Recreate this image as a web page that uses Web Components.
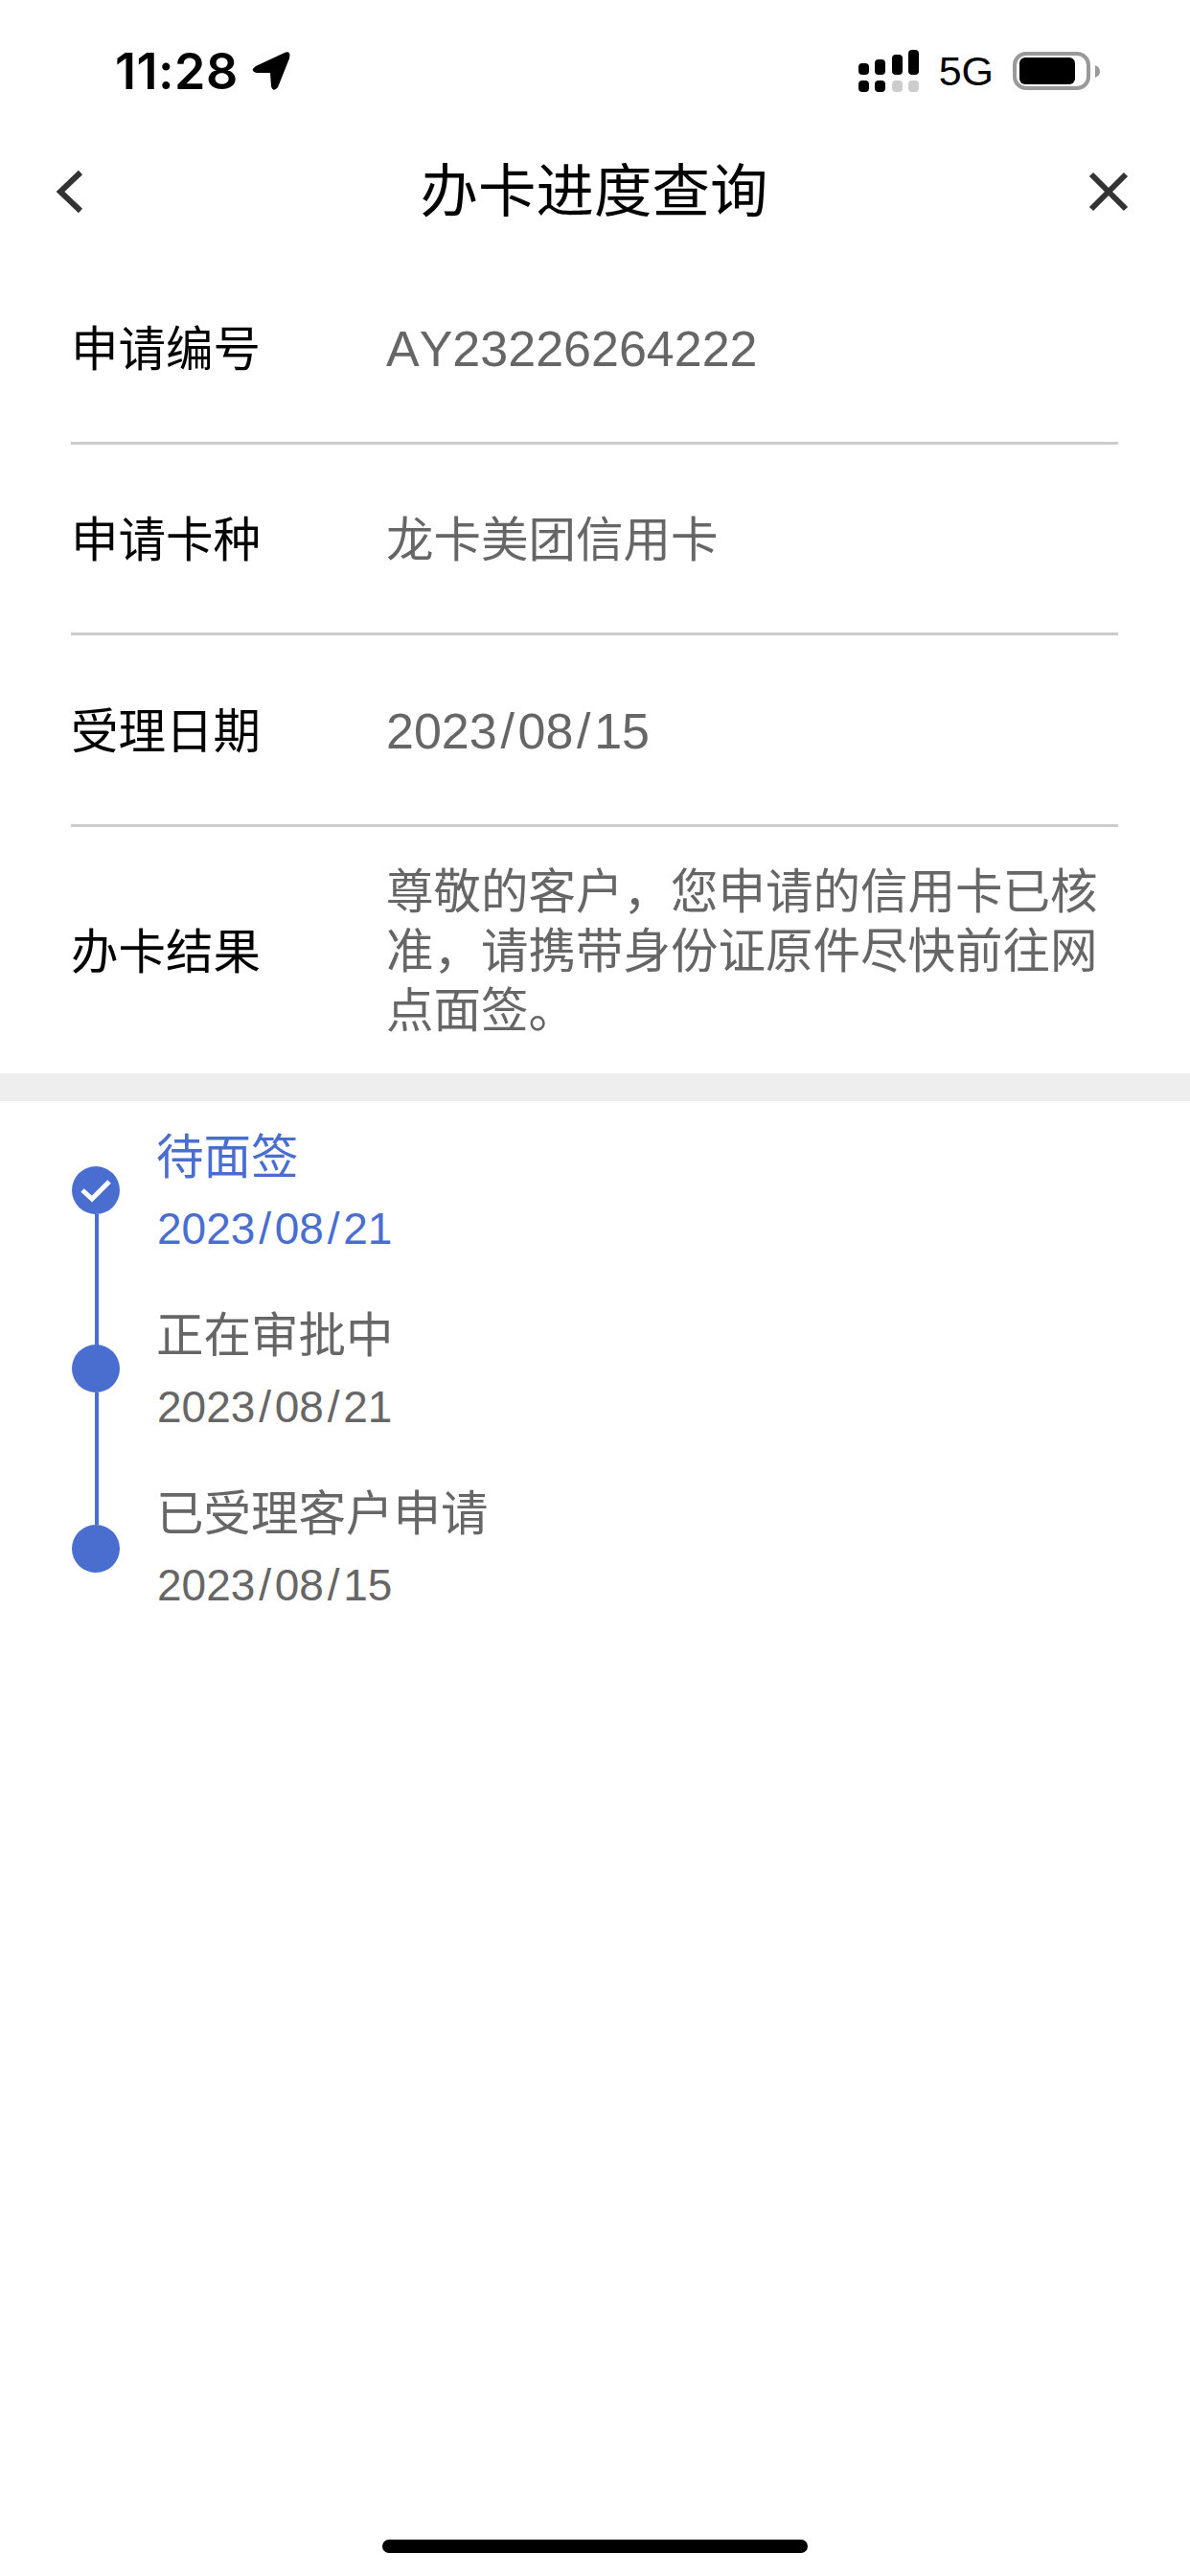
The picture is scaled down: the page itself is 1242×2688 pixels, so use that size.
<!DOCTYPE html>
<html lang="zh-CN">
<head>
<meta charset="utf-8">
<title>办卡进度查询</title>
<style>
  html, body { margin: 0; padding: 0; background: #fff; }
</style>
</head>
<body>
<app-screen>
  <status-bar></status-bar>
  <nav-bar>办卡进度查询</nav-bar>
  <info-list>
    <info-row num><span slot="label">申请编号</span>AY23226264222</info-row>
    <info-row><span slot="label">申请卡种</span>龙卡美团信用卡</info-row>
    <info-row num><span slot="label">受理日期</span>2023<span class="sl">/</span>08<span class="sl">/</span>15</info-row>
    <info-row last><span slot="label">办卡结果</span>尊敬的客户，您申请的信用卡已核准，请携带身份证原件尽快前往网点面签。</info-row>
  </info-list>
  <section-gap></section-gap>
  <progress-list>
    <progress-step state="current" title="待面签" date="2023/08/21"></progress-step>
    <progress-step title="正在审批中" date="2023/08/21"></progress-step>
    <progress-step state="end" title="已受理客户申请" date="2023/08/15"></progress-step>
  </progress-list>
  <home-indicator></home-indicator>
</app-screen>

<script>
class AppScreen extends HTMLElement {
  connectedCallback() {
    this.attachShadow({ mode: 'open' });
    this.shadowRoot.innerHTML = `
      <style>
        :host {
          display: flex;
          flex-direction: column;
          width: 1242px;
          height: 2688px;
          overflow: hidden;
          background: #fff;
          color: #000;
          font-family: "Liberation Sans", "Noto Sans CJK SC", sans-serif;
          font-kerning: none;
        }
      </style>
      <slot></slot>
    `;
  }
}

class StatusBar extends HTMLElement {
  connectedCallback() {
    this.attachShadow({ mode: 'open' });
    this.shadowRoot.innerHTML = `
      <style>
        :host {
          display: flex;
          align-items: center;
          height: 148px;
          padding: 0 94px 0 120px;
          flex: none;
        }
        .time {
          font-family: Inter, sans-serif;
          font-size: 52px;
          font-weight: 600;
          letter-spacing: 0.5px;
          line-height: 60px;
          padding-top: 2px;
        }
        .arrow { margin-left: 11px; }
        .right {
          display: flex;
          align-items: center;
          margin-left: auto;
        }
        .net {
          font-size: 43px;
          line-height: 50px;
          margin: 0 20px 0 21px;
        }
        svg { display: block; }
      </style>
      <span class="time">11:28</span>
      <svg class="arrow" width="46" height="48" viewBox="260 50 46 48">
        <path fill="#000" d="M297 55 L267 69 Q260 74 268 76 L282 76 L283 90 Q285 97 290 91 L302 61 Q304 52 297 55 Z"/>
      </svg>
      <div class="right">
        <svg width="63" height="44" viewBox="895 51 63 44">
          <rect x="895" y="65" width="11" height="12" rx="4"/>
          <rect x="912" y="61" width="11" height="16" rx="4"/>
          <rect x="930" y="56" width="11" height="21" rx="4"/>
          <rect x="947" y="51" width="11" height="26" rx="4"/>
          <rect x="895" y="83" width="11" height="12" rx="4"/>
          <rect x="912" y="83" width="11" height="12" rx="4"/>
          <rect x="930" y="83" width="11" height="12" rx="4" fill="#ccc"/>
          <rect x="947" y="83" width="11" height="12" rx="4" fill="#ccc"/>
        </svg>
        <span class="net">5G</span>
        <svg width="91" height="40" viewBox="1057 53 91 40">
          <rect x="1059" y="55" width="77" height="36" rx="12" fill="none" stroke="#999" stroke-width="4"/>
          <rect x="1064" y="59" width="58" height="28" rx="6"/>
          <path fill="#999" d="M1143 67 Q1148 69 1148 73.500 Q1148 78 1143 80 Z"/>
        </svg>
      </div>
    `;
  }
}

class NavBar extends HTMLElement {
  connectedCallback() {
    this.attachShadow({ mode: 'open' });
    this.shadowRoot.innerHTML = `
      <style>
        :host {
          display: grid;
          grid-template-columns: 1fr auto 1fr;
          align-items: center;
          height: 104px;
          padding: 0 60px 0 58px;
          flex: none;
        }
        .title {
          font-size: 60.500px;
          line-height: 80px;
          color: #000;
        }
        svg { display: block; }
        .close { justify-self: end; margin-right: 3px; }
      </style>
      <svg width="30" height="48" viewBox="0 0 30 48">
        <path d="M26 4 L5 24 L26 44" fill="none" stroke="#333" stroke-width="6"/>
      </svg>
      <span class="title"><slot></slot></span>
      <svg class="close" width="44" height="44" viewBox="0 0 44 44">
        <path d="M4 4 L40 40 M40 4 L4 40" fill="none" stroke="#333" stroke-width="6"/>
      </svg>
    `;
  }
}

class InfoList extends HTMLElement {
  connectedCallback() {
    this.attachShadow({ mode: 'open' });
    this.shadowRoot.innerHTML = `
      <style>
        :host {
          display: block;
          flex: none;
          padding: 12px 75px 0 74px;
        }
      </style>
      <slot></slot>
    `;
  }
}

class InfoRow extends HTMLElement {
  connectedCallback() {
    this.attachShadow({ mode: 'open' });
    this.shadowRoot.innerHTML = `
      <style>
        :host {
          display: flex;
          align-items: center;
          height: 196.500px;
          border-bottom: 3px solid #ccc;
          font-size: 49.500px;
        }
        :host([last]) {
          height: 257px;
          border-bottom: 0;
        }
        .label {
          flex: none;
          width: 329px;
          color: #000;
          line-height: 62px;
          padding-top: 5px;
        }
        .value {
          flex: 1;
          color: #666;
          line-height: 62px;
          padding-top: 4px;
        }
        :host([num]) .value { font-size: 52px; }
        ::slotted(.sl) { margin: 0 3.700px; }
      </style>
      <div class="label"><slot name="label"></slot></div>
      <div class="value"><slot></slot></div>
    `;
  }
}

class SectionGap extends HTMLElement {
  connectedCallback() {
    this.attachShadow({ mode: 'open' });
    this.shadowRoot.innerHTML = `
      <style>
        :host {
          display: block;
          flex: none;
          height: 29px;
          background: #eee;
        }
      </style>
    `;
  }
}

class ProgressList extends HTMLElement {
  connectedCallback() {
    this.attachShadow({ mode: 'open' });
    this.shadowRoot.innerHTML = `
      <style>
        :host {
          display: block;
          flex: none;
          padding: 22px 0 0 75px;
        }
      </style>
      <slot></slot>
    `;
  }
}

class ProgressStep extends HTMLElement {
  connectedCallback() {
    const title = this.getAttribute('title');
    const date = this.getAttribute('date').replace(/\//g, '<span class="sl">/</span>');
    this.attachShadow({ mode: 'open' });
    this.shadowRoot.innerHTML = `
      <style>
        :host {
          display: flex;
          gap: 38px;
          height: 186px;
          color: #666;
          --blue: #4a6dd0;
        }
        :host([state="current"]) { color: var(--blue); }
        .rail {
          flex: none;
          display: flex;
          flex-direction: column;
          width: 50px;
          padding-top: 46px;
          box-sizing: border-box;
        }
        :host([state="end"]) .rail { padding-top: 48px; }
        .dot {
          flex: none;
          display: flex;
          align-items: center;
          justify-content: center;
          width: 50px;
          height: 50px;
          border-radius: 50%;
          background: var(--blue);
        }
        .line {
          flex: 1;
          width: 3.500px;
          margin: 0 0 -48px 24px;
          background: var(--blue);
        }
        :host([state="end"]) .line { display: none; }
        .title {
          font-size: 49.500px;
          line-height: 74px;
        }
        .date {
          font-size: 46px;
          line-height: 74px;
          padding-left: 1px;
        }
        .sl { margin: 0 3.800px; }
        svg { display: block; }
      </style>
      <div class="rail">
        <div class="dot">${this.getAttribute('state') === 'current' ? `
          <svg width="34" height="26" viewBox="0 0 34 26">
            <path d="M3 13 L13 22 L31 4" fill="none" stroke="#fff" stroke-width="5"/>
          </svg>` : ''}</div>
        <div class="line"></div>
      </div>
      <div class="text">
        <div class="title">${title}</div>
        <div class="date">${date}</div>
      </div>
    `;
  }
}

class HomeIndicator extends HTMLElement {
  connectedCallback() {
    this.attachShadow({ mode: 'open' });
    this.shadowRoot.innerHTML = `
      <style>
        :host {
          display: block;
          flex: none;
          width: 444px;
          height: 14px;
          margin: auto 0 24px 399px;
          border-radius: 7px;
          background: #000;
        }
      </style>
    `;
  }
}

customElements.define('app-screen', AppScreen);
customElements.define('status-bar', StatusBar);
customElements.define('nav-bar', NavBar);
customElements.define('info-list', InfoList);
customElements.define('info-row', InfoRow);
customElements.define('section-gap', SectionGap);
customElements.define('progress-list', ProgressList);
customElements.define('progress-step', ProgressStep);
customElements.define('home-indicator', HomeIndicator);
</script>
</body>
</html>
